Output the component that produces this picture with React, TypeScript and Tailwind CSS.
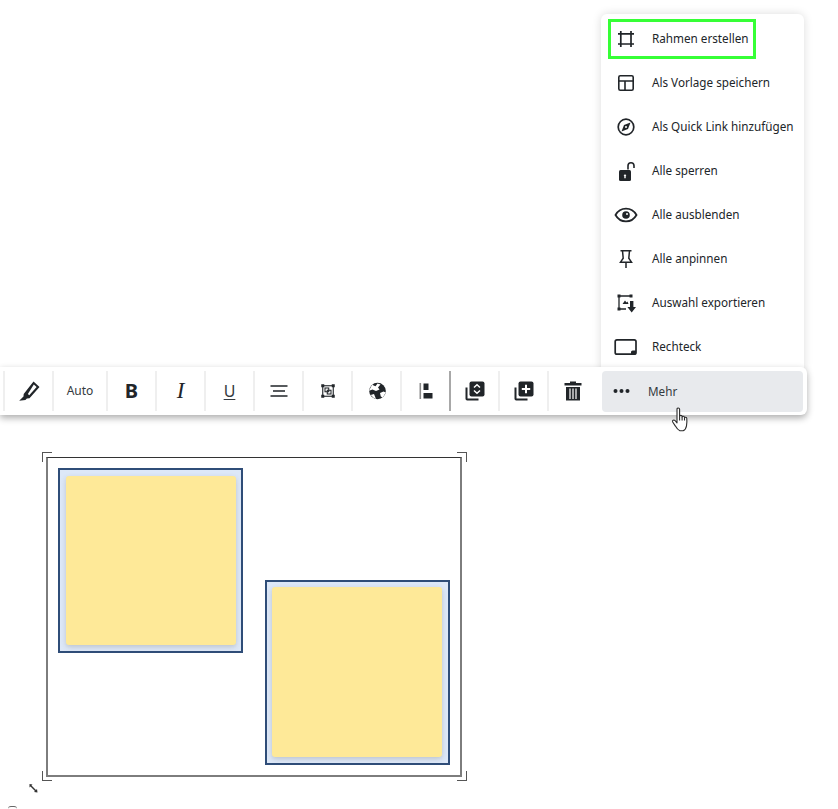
const font = "font-['Noto_Sans','Open_Sans',sans-serif]";

function FrameIcon() {
  return (
    <svg width="24" height="24" viewBox="0 0 24 24" fill="none" stroke="#212529" strokeWidth="1.700">
      <path d="M6.800 4v16M17 4v16M4 6.800h16M4 17h16" />
    </svg>
  );
}

function TemplateIcon() {
  return (
    <svg width="24" height="24" viewBox="0 0 24 24" fill="none" stroke="#212529" strokeWidth="1.600">
      <rect x="4.800" y="4.800" width="14.400" height="14.400" rx="1.500" />
      <path d="M4.800 10h14.400M11 10v9.200" />
    </svg>
  );
}

function CompassIcon() {
  return (
    <svg width="24" height="24" viewBox="0 0 24 24" fill="none">
      <circle cx="12" cy="12" r="7.800" stroke="#212529" strokeWidth="1.700" />
      <path d="M16.500 7.500l-2.500 6.500-6.500 2.500 2.500-6.500z" fill="#212529" />
      <circle cx="12" cy="12" r="1" fill="#fff" />
    </svg>
  );
}

function UnlockIcon() {
  return (
    <svg width="24" height="24" viewBox="0 0 24 24" fill="none">
      <rect x="5" y="11" width="12" height="11" rx="1.500" fill="#212529" />
      <path d="M10.300 17h1.400v2.200h-1.400zM11 15l1.400 2h-2.800z" fill="#fff" />
      <path d="M14 10.500V6.800a3 3 0 0 1 6 0V9" stroke="#212529" strokeWidth="1.600" />
    </svg>
  );
}

function EyeIcon() {
  return (
    <svg width="24" height="24" viewBox="0 0 24 24" fill="none">
      <path d="M1.500 12C4 7.600 7.700 5.600 12 5.600s8 2 10.500 6.400c-2.500 4.400-6.200 6.400-10.500 6.400S4 16.400 1.500 12z" stroke="#212529" strokeWidth="1.800" />
      <circle cx="12" cy="12" r="3.800" fill="#212529" />
      <circle cx="13" cy="11" r="1" fill="#fff" />
    </svg>
  );
}

function PinIcon() {
  return (
    <svg width="24" height="24" viewBox="0 0 24 24" fill="none" stroke="#212529" strokeWidth="1.500">
      <path d="M6.500 3.800h11M8.500 3.800l.7 7.400-2.700 4h11l-2.700-4 .7-7.400M12 15.200V21" />
    </svg>
  );
}

function ExportIcon() {
  return (
    <svg width="24" height="24" viewBox="0 0 24 24" fill="none">
      <path d="M5 5h12M5 5v13M5 18h7" stroke="#212529" strokeWidth="1.300" />
      <path d="M3.500 3.500h3v3h-3zM15.500 3.500h3v3h-3zM3.500 16.500h3v3h-3z" fill="#212529" />
      <path d="M8.500 13l2.500-3.500 1.500 2 1-1 1 2.500z" fill="#212529" />
      <path d="M16 10h3.400v6H22l-4.300 5.500L13.400 16H16z" fill="#212529" />
    </svg>
  );
}

function RectIcon() {
  return (
    <svg width="24" height="24" viewBox="0 0 24 24" fill="none">
      <rect x="1.200" y="4.800" width="20.800" height="14.400" rx="1.800" stroke="#212529" strokeWidth="1.700" />
      <path d="M17 19.200v-2.200a1.600 1.600 0 0 1 1.600-1.600H22v2.200a1.600 1.600 0 0 1-1.600 1.600z" fill="#212529" />
    </svg>
  );
}

function PenIcon() {
  return (
    <svg width="24" height="24" viewBox="0 0 24 24" fill="none">
      <path d="M16.500 2.500l6 5.500-10 11.200-2.600.3-1.500 1.500-6.200.8 4.300-4.300.2-2.600z" fill="#212529" />
      <path d="M16.800 5.400l2.800 2.600-7.400 8.300-1.300-1.200z" fill="#fff" />
    </svg>
  );
}

function AlignIcon() {
  return (
    <svg width="24" height="24" viewBox="0 0 24 24" fill="none" stroke="#212529" strokeWidth="1.600">
      <path d="M3.500 7h17M6 12h12M3.500 17h17" />
    </svg>
  );
}

function GroupIcon() {
  return (
    <svg width="18" height="18" viewBox="0 0 24 24" fill="none">
      <rect x="5" y="5" width="14" height="14" stroke="#212529" strokeWidth="1.500" />
      <path d="M3 3h4v4H3zM17 3h4v4h-4zM3 17h4v4H3zM17 17h4v4h-4z" fill="#212529" />
      <rect x="8" y="8" width="5" height="5" stroke="#212529" strokeWidth="1.400" />
      <rect x="11" y="11" width="5" height="5" stroke="#212529" strokeWidth="1.400" />
    </svg>
  );
}

function GlobeIcon() {
  return (
    <svg width="24" height="24" viewBox="0 0 24 24" fill="none">
      <circle cx="12.500" cy="12" r="8.300" fill="#212529" />
      <path d="M7 5.800l3.500 1.500 2-2.800 3 1-2.500 3 1.500 2-3.500 1.500-3.500-1.500-3.500 1.200zM15 14l3.500-1.500 2.300 1-3 5-2-1zM9 15l2 5-2.500-1.200-2.800-2.800z" fill="#fff" />
    </svg>
  );
}

function DistributeIcon() {
  return (
    <svg width="24" height="24" viewBox="0 0 24 24" fill="none">
      <path d="M6.300 4v16" stroke="#8a8a8a" strokeWidth="1.600" />
      <path d="M9.500 4.500h5v6.500h-5zM9.500 14h9v5.500h-9z" fill="#212529" />
    </svg>
  );
}

function LayerIcon() {
  return (
    <svg width="24" height="24" viewBox="0 0 24 24" fill="none">
      <path d="M2.500 8.500v11.300a1.700 1.700 0 0 0 1.700 1.700h11.300v-2H4.500v-11z" fill="#212529" />
      <rect x="6.500" y="2.500" width="15" height="15" rx="2" fill="#212529" />
      <path d="M11 8.500L14 5.800l3 2.700M11 11.500l3 2.700 3-2.700" stroke="#fff" strokeWidth="1.500" />
    </svg>
  );
}

function DuplicateIcon() {
  return (
    <svg width="24" height="24" viewBox="0 0 24 24" fill="none">
      <path d="M2.500 8.500v11.300a1.700 1.700 0 0 0 1.700 1.700h11.300v-2H4.500v-11z" fill="#212529" />
      <rect x="6.500" y="2.500" width="15" height="15" rx="2" fill="#212529" />
      <path d="M14 5.800v8.400M9.800 10h8.400" stroke="#fff" strokeWidth="2" />
    </svg>
  );
}

function TrashIcon() {
  return (
    <svg width="24" height="24" viewBox="0 0 24 24" fill="none">
      <path d="M9 2.500h6v1.500h5.500v2.400h-17V4H9z" fill="#212529" />
      <path d="M5 8h14v13.500H5z" fill="#212529" />
      <path d="M9 9.500v10.500M12 9.500v10.500M15 9.500v10.500" stroke="#fff" strokeWidth="1.200" />
    </svg>
  );
}

function HandCursor() {
  return (
    <svg width="21" height="26" viewBox="0 0 20 26" fill="#fff" stroke="#2b2b2b" strokeWidth="1.100" strokeLinejoin="round">
      <path d="M5.500 2.200c0-1.600 2.600-1.600 2.600 0v7.300c0-1.500 2.500-1.500 2.500 0v.7c0-1.300 2.400-1.300 2.400.2v.7c0-1.200 2.300-1.100 2.300.4.200 2.600.1 5.200-.3 7.300-.4 2.300-1.600 4.200-3.300 5H8.400c-2-.8-3.400-2.700-4.500-4.700L1.200 15c-.8-1.500 1.100-2.700 2.300-1.500l2 2.300z" />
      <path d="M8.100 9.500v4M10.600 10.200v3.300M13 11v2.600" />
    </svg>
  );
}

const menuItems = [
  { label: "Rahmen erstellen", icon: <FrameIcon /> },
  { label: "Als Vorlage speichern", icon: <TemplateIcon /> },
  { label: "Als Quick Link hinzufügen", icon: <CompassIcon /> },
  { label: "Alle sperren", icon: <UnlockIcon /> },
  { label: "Alle ausblenden", icon: <EyeIcon /> },
  { label: "Alle anpinnen", icon: <PinIcon /> },
  { label: "Auswahl exportieren", icon: <ExportIcon /> },
  { label: "Rechteck", icon: <RectIcon /> },
];

function ToolCell({ children, wide, dark }: { children: React.ReactNode; wide?: boolean; dark?: boolean }) {
  return (
    <div className={`flex h-10 items-center justify-center border-l-2 ${dark ? "border-[#a8a8a8]" : "border-[#efefef]"} ${wide ? "w-[54px]" : "w-[49px]"}`}>
      {children}
    </div>
  );
}

function Sticky({ className, innerClass }: { className: string; innerClass: string }) {
  return (
    <div className={`absolute h-[185px] w-[185px] border-2 border-[#2f4d78] bg-[#dde8f8] ${innerClass} ${className}`}>
      <div className="h-full w-full rounded-[3px] bg-[#fee998] shadow-[0_2px_5px_rgba(90,90,90,0.25)]" />
    </div>
  );
}

export default function App() {
  return (
    <div className={`relative h-[809px] w-[838px] overflow-hidden bg-white ${font}`}>
      {/* canvas */}
      <div className="absolute left-[46px] top-[457px] h-[320px] w-[416px] border-2 border-t-1 border-[#7d7d7d] border-t-[#333333]" />
      <div className="absolute left-[42px] top-[452px] h-[10px] w-[10px] border-l border-t border-[#555]" />
      <div className="absolute left-[457px] top-[452px] h-[10px] w-[10px] border-r border-t border-[#555]" />
      <div className="absolute left-[42px] top-[771px] h-[10px] w-[10px] border-b border-l border-[#555]" />
      <div className="absolute left-[457px] top-[771px] h-[10px] w-[10px] border-b border-r border-[#555]" />
      <Sticky className="left-[58px] top-[468px]" innerClass="p-[6px] pr-[5px]" />
      <Sticky className="left-[265px] top-[580px]" innerClass="p-[6px] pl-[5px] pt-[5px]" />
      <svg className="absolute left-[28px] top-[783px]" width="12" height="12" viewBox="0 0 12 12" fill="#333">
        <path d="M1.500 1l3 .5-1 1 4.500 4.500 1-1 .5 3.500-3.500-.5 1-1L2.500 3.500l-1 1z" />
      </svg>
      <div className="absolute left-[8px] top-[806px] h-[3px] w-[9px] rounded-t-full border-t border-[#666]" />

      {/* context menu */}
      <div className="absolute left-[601px] top-[14px] h-[360px] w-[203px] rounded-[6px] bg-white pt-[3px] shadow-[0_0_10px_rgba(0,0,0,0.14)]">
        {menuItems.map((item) => (
          <div key={item.label} className="flex h-11 items-center gap-[14px] pl-[13px]">
            <div className="flex w-6 shrink-0 items-center justify-center">{item.icon}</div>
            <span className="whitespace-nowrap text-[11.700px] text-[#212529]">{item.label}</span>
          </div>
        ))}
        <div className="absolute left-[7px] top-[5px] h-[40px] w-[148px] border-[3px] border-[#36ff36]" />
      </div>

      {/* toolbar */}
      <div className="absolute left-0 top-[367px] flex h-[48px] w-[807px] items-center rounded-r-[6px] bg-white pl-[3px] shadow-[0_3px_7px_rgba(0,0,0,0.32)]">
        <ToolCell><PenIcon /></ToolCell>
        <ToolCell wide><span className="text-[12px] text-[#343a40]">Auto</span></ToolCell>
        <ToolCell><span className="text-[20px] font-bold text-[#212529]">B</span></ToolCell>
        <ToolCell><span className="font-['Liberation_Serif',serif] text-[23px] italic text-[#212529]">I</span></ToolCell>
        <ToolCell><span className="text-[16px] text-[#343a40] underline underline-offset-[2px]">U</span></ToolCell>
        <ToolCell><AlignIcon /></ToolCell>
        <ToolCell><GroupIcon /></ToolCell>
        <ToolCell><GlobeIcon /></ToolCell>
        <ToolCell><DistributeIcon /></ToolCell>
        <ToolCell dark><LayerIcon /></ToolCell>
        <ToolCell><DuplicateIcon /></ToolCell>
        <ToolCell><TrashIcon /></ToolCell>
        <div className="ml-[6px] flex h-[41px] w-[201px] items-center gap-[18px] rounded-[4px] bg-[#e8eaed] pl-[11px]">
          <svg width="17" height="6" viewBox="0 0 17 6" fill="#212529">
            <circle cx="2.500" cy="3" r="2" />
            <circle cx="8.500" cy="3" r="2" />
            <circle cx="14.500" cy="3" r="2" />
          </svg>
          <span className="translate-y-px text-[11.700px] text-[#343a40]">Mehr</span>
        </div>
      </div>

      {/* mouse pointer */}
      <div className="absolute left-[671px] top-[407px]">
        <HandCursor />
      </div>
    </div>
  );
}
